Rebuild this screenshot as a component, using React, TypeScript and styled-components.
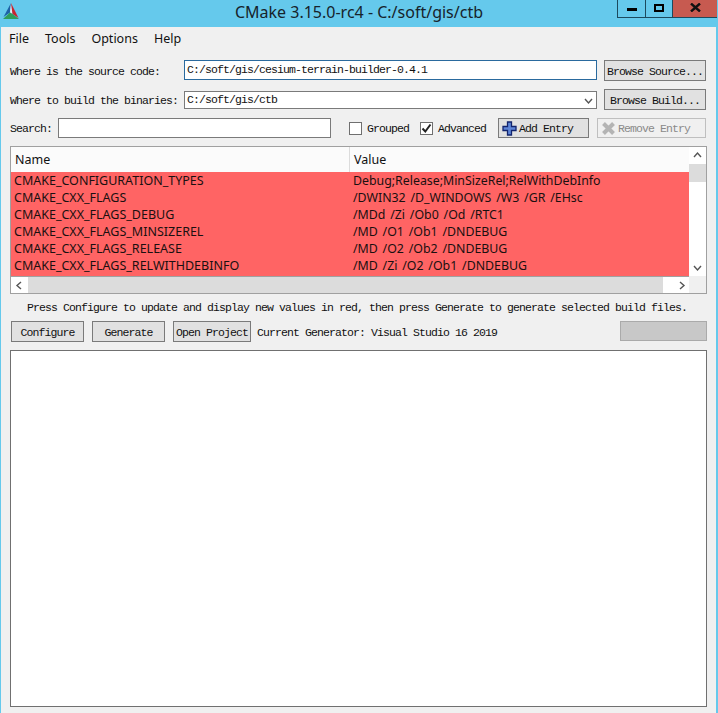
import styled, { createGlobalStyle } from 'styled-components';

const rows = [
    ['CMAKE_CONFIGURATION_TYPES', 'Debug;Release;MinSizeRel;RelWithDebInfo'],
    ['CMAKE_CXX_FLAGS', '/DWIN32 /D_WINDOWS /W3 /GR /EHsc'],
    ['CMAKE_CXX_FLAGS_DEBUG', '/MDd /Zi /Ob0 /Od /RTC1'],
    ['CMAKE_CXX_FLAGS_MINSIZEREL', '/MD /O1 /Ob1 /DNDEBUG'],
    ['CMAKE_CXX_FLAGS_RELEASE', '/MD /O2 /Ob2 /DNDEBUG'],
    ['CMAKE_CXX_FLAGS_RELWITHDEBINFO', '/MD /Zi /O2 /Ob1 /DNDEBUG'],
];

const Chevron: React.FC<{ dir: 'up' | 'down' | 'left' | 'right' }> = ({ dir }) => {
    const points = {
        up: '2,7 5.5,3 9,7',
        down: '2,4 5.5,8 9,4',
        left: '7,2 3,5.5 7,9',
        right: '4,2 8,5.5 4,9',
    }[dir];
    return (
        <svg width="11" height="11" viewBox="0 0 11 11">
            <polyline points={points} fill="none" stroke="#555" strokeWidth="1.4" />
        </svg>
    );
};

const App: React.FC = () => {
    return (
        <>
            <GlobalStyle />
            <StyledWindow>
                <StyledTitleBar>
                    <StyledLogo viewBox="0 0 16 16" width="16" height="16">
                        <polygon points="8,0 0.5,14 7,9.5" fill="#1d62a6" />
                        <polygon points="8,0 7,9.5 9.5,11" fill="#e6edf2" />
                        <polygon points="8,0 9.5,11 15.5,15" fill="#c9242f" />
                        <polygon points="0,16 16,16 9.5,11 7,9.5" fill="#2f9e5a" />
                    </StyledLogo>
                    <StyledTitle>CMake 3.15.0-rc4 - C:/soft/gis/ctb</StyledTitle>
                    <StyledControls>
                        <StyledControl $width={28}>
                            <StyledMinimize />
                        </StyledControl>
                        <StyledControl $width={27}>
                            <StyledMaximize />
                        </StyledControl>
                        <StyledClose>
                            <svg width="11" height="9" viewBox="0 0 11 9">
                                <path d="M1 0.5 L10 8.5 M10 0.5 L1 8.5" stroke="#111" strokeWidth="2.4" />
                            </svg>
                        </StyledClose>
                    </StyledControls>
                </StyledTitleBar>
                <StyledMenuBar>
                    <StyledMenuItem>File</StyledMenuItem>
                    <StyledMenuItem>Tools</StyledMenuItem>
                    <StyledMenuItem>Options</StyledMenuItem>
                    <StyledMenuItem>Help</StyledMenuItem>
                </StyledMenuBar>
                <StyledContent>
                    <StyledPathGrid>
                        <StyledLabel>Where is the source code:</StyledLabel>
                        <StyledPathField $height={20} $focused>
                            C:/soft/gis/cesium-terrain-builder-0.4.1
                        </StyledPathField>
                        <StyledButton>Browse Source...</StyledButton>
                        <StyledLabel>Where to build the binaries:</StyledLabel>
                        <StyledPathField $height={18}>
                            C:/soft/gis/ctb
                            <StyledComboArrow>
                                <Chevron dir="down" />
                            </StyledComboArrow>
                        </StyledPathField>
                        <StyledButton>Browse Build...</StyledButton>
                    </StyledPathGrid>
                    <StyledSearchRow>
                        <StyledSearchLabel>Search:</StyledSearchLabel>
                        <StyledSearchInput />
                        <StyledCheckGroup>
                            <StyledCheckbox />
                            <StyledLabel>Grouped</StyledLabel>
                        </StyledCheckGroup>
                        <StyledCheckGroup>
                            <StyledCheckbox>
                                <svg width="11" height="11" viewBox="0 0 11 11">
                                    <path d="M1.5 5.5 L4.3 8.5 L9.5 1.5" fill="none" stroke="#222" strokeWidth="2" />
                                </svg>
                            </StyledCheckbox>
                            <StyledLabel>Advanced</StyledLabel>
                        </StyledCheckGroup>
                        <StyledEntryButton $width={91} $offset={12}>
                            <svg width="15" height="15" viewBox="0 0 15 15">
                                <path
                                    d="M5.5 1 H9.5 V5.5 H14 V9.5 H9.5 V14 H5.5 V9.5 H1 V5.5 H5.5 Z"
                                    fill="#5f86d8"
                                    stroke="#12246e"
                                    strokeWidth="1.3"
                                />
                            </svg>
                            Add Entry
                        </StyledEntryButton>
                        <StyledEntryButton $width={109} $offset={8} $disabled>
                            <svg width="15" height="15" viewBox="0 0 15 15">
                                <path d="M2.5 2.5 L12.5 12.5 M12.5 2.5 L2.5 12.5" stroke="#b4b4b4" strokeWidth="4" />
                            </svg>
                            Remove Entry
                        </StyledEntryButton>
                    </StyledSearchRow>
                    <StyledTable>
                        <StyledTableMain>
                            <StyledHeader>
                                <StyledHeaderCell $width={339}>Name</StyledHeaderCell>
                                <StyledHeaderCell>Value</StyledHeaderCell>
                            </StyledHeader>
                            <StyledRows>
                                {rows.map(([name, value]) => (
                                    <StyledRow key={name}>
                                        <StyledCell>{name}</StyledCell>
                                        <StyledValueCell>{value}</StyledValueCell>
                                    </StyledRow>
                                ))}
                            </StyledRows>
                        </StyledTableMain>
                        <StyledVScroll>
                            <StyledArrowButton $height={17}>
                                <Chevron dir="up" />
                            </StyledArrowButton>
                            <StyledVThumb />
                            <StyledVTrack />
                            <StyledArrowButton $height={17}>
                                <Chevron dir="down" />
                            </StyledArrowButton>
                        </StyledVScroll>
                        <StyledHScroll>
                            <StyledArrowButton $width={17}>
                                <Chevron dir="left" />
                            </StyledArrowButton>
                            <StyledHThumb />
                            <StyledHTrack />
                            <StyledArrowButton $width={16}>
                                <Chevron dir="right" />
                            </StyledArrowButton>
                        </StyledHScroll>
                        <StyledCorner />
                    </StyledTable>
                    <StyledHint>
                        Press Configure to update and display new values in red, then press Generate to generate selected build files.
                    </StyledHint>
                    <StyledActionRow>
                        <StyledActionButton $width={73}>Configure</StyledActionButton>
                        <StyledActionButton $width={73}>Generate</StyledActionButton>
                        <StyledActionButton $width={78}>Open Project</StyledActionButton>
                        <StyledGenerator>Current Generator: Visual Studio 16 2019</StyledGenerator>
                        <StyledProgress />
                    </StyledActionRow>
                    <StyledOutput />
                </StyledContent>
            </StyledWindow>
        </>
    );
};

export default App;

const GlobalStyle = createGlobalStyle`
    html, body {
        margin: 0;
        height: 100%;
        overflow: hidden;
    }
    #root {
        height: 100%;
    }
    * {
        box-sizing: border-box;
    }
`;

const monoText = `
    font-family: 'Liberation Mono', monospace;
    font-size: 11.5px;
    letter-spacing: -0.9px;
    color: #111;
    white-space: pre;
    padding-top: 1px;
`;

const StyledWindow = styled.div`
    width: 718px;
    height: 713px;
    display: flex;
    flex-direction: column;
    background: #65c9ec;
    padding: 0 2px 0 1px;
`;

const StyledTitleBar = styled.div`
    height: 27px;
    flex: none;
    margin: 0 -2px 0 -1px;
    display: grid;
    grid-template-columns: 1fr auto 1fr;
    align-items: start;
`;

const StyledLogo = styled.svg`
    margin: 3px 0 0 3px;
`;

const StyledTitle = styled.div`
    font-family: 'Noto Sans', sans-serif;
    font-size: 16px;
    line-height: 24px;
    color: #16232b;
`;

const StyledControls = styled.div`
    justify-self: end;
    display: flex;
    height: 18px;
    margin-right: 1px;
    border-left: 1px solid #1c4a5e;
    border-bottom: 1px solid #1c4a5e;
`;

const StyledControl = styled.div<{ $width: number }>`
    width: ${(p) => p.$width}px;
    display: flex;
    align-items: center;
    justify-content: center;
    border-right: 1px solid #1c4a5e;
`;

const StyledMinimize = styled.div`
    width: 10px;
    height: 3px;
    margin-top: 2px;
    background: #000;
`;

const StyledMaximize = styled.div`
    width: 10px;
    height: 8px;
    margin-bottom: 2px;
    border: 2px solid #000;
`;

const StyledClose = styled.div`
    width: 44px;
    display: flex;
    align-items: center;
    justify-content: center;
    padding-bottom: 2px;
    background: #c75a50;
`;

const StyledMenuBar = styled.div`
    height: 23px;
    flex: none;
    display: flex;
    align-items: center;
    gap: 16px;
    padding: 0 0 1px 8px;
    background: #f0f0f0;
`;

const StyledMenuItem = styled.div`
    font-family: 'Noto Sans', sans-serif;
    font-size: 12.5px;
    color: #111;
`;

const StyledContent = styled.div`
    flex: 1;
    display: flex;
    flex-direction: column;
    min-height: 0;
    padding: 10px 9px 6px 9px;
    background: #f0f0f0;
`;

const StyledPathGrid = styled.div`
    display: grid;
    grid-template-columns: 174px 413px 102px;
    grid-auto-rows: 21px;
    column-gap: 0;
    row-gap: 8px;
    align-items: center;
`;

const StyledLabel = styled.div`
    ${monoText}
`;

const StyledPathField = styled.div<{ $height: number; $focused?: boolean }>`
    ${monoText}
    position: relative;
    height: ${(p) => p.$height}px;
    width: 413px;
    line-height: ${(p) => p.$height - 4}px;
    padding: 1px 2px;
    align-self: ${(p) => (p.$focused ? 'start' : 'center')};
    background: #fff;
    border: 1px solid ${(p) => (p.$focused ? '#2a6a9e' : '#7a7a7a')};
`;

const StyledComboArrow = styled.span`
    position: absolute;
    right: 2px;
    top: 3px;
    display: flex;
`;

const StyledButton = styled.div`
    ${monoText}
    height: 21px;
    width: 102px;
    margin-left: 7px;
    display: flex;
    align-items: center;
    justify-content: center;
    background: #e1e1e1;
    border: 1px solid #7a7a7a;
`;

const StyledSearchRow = styled.div`
    display: flex;
    align-items: center;
    height: 20px;
    margin-top: 8px;
`;

const StyledSearchLabel = styled.div`
    ${monoText}
    width: 48px;
`;

const StyledSearchInput = styled.div`
    width: 273px;
    height: 20px;
    background: #fff;
    border: 1px solid #7a7a7a;
`;

const StyledCheckGroup = styled.div`
    display: flex;
    align-items: center;
    gap: 5px;
    margin-left: 18px;

    & + & {
        margin-left: 11px;
    }
`;

const StyledCheckbox = styled.div`
    width: 13px;
    height: 13px;
    display: flex;
    align-items: center;
    justify-content: center;
    background: #fff;
    border: 1px solid #6f6f6f;
`;

const StyledEntryButton = styled.div<{ $width: number; $offset: number; $disabled?: boolean }>`
    ${monoText}
    width: ${(p) => p.$width}px;
    height: 20px;
    display: flex;
    align-items: center;
    gap: 2px;
    padding: 0 0 0 3px;
    margin-left: ${(p) => p.$offset}px;
    color: ${(p) => (p.$disabled ? '#8a8a8a' : '#111')};
    background: ${(p) => (p.$disabled ? '#f0f0f0' : '#e1e1e1')};
    border: 1px solid ${(p) => (p.$disabled ? '#bfbfbf' : '#7a7a7a')};
`;

const StyledTable = styled.div`
    width: 697px;
    height: 148px;
    margin-top: 8px;
    flex: none;
    display: grid;
    grid-template-columns: 678px 17px;
    grid-template-rows: 129px 17px;
    background: #fff;
    border: 1px solid #a0a0a0;
`;

const StyledTableMain = styled.div`
    display: flex;
    flex-direction: column;
    min-width: 0;
`;

const StyledHeader = styled.div`
    height: 25px;
    flex: none;
    display: flex;
    background: #fbfbfb;
`;

const StyledHeaderCell = styled.div<{ $width?: number }>`
    width: ${(p) => (p.$width ? `${p.$width}px` : 'auto')};
    flex: ${(p) => (p.$width ? 'none' : 1)};
    padding: 0 3px 0 4px;
    font-family: 'Noto Sans', sans-serif;
    font-size: 12.5px;
    line-height: 25px;
    color: #111;
    border-right: ${(p) => (p.$width ? '1px solid #dcdcdc' : 'none')};
`;

const StyledRows = styled.div`
    flex: 1;
    background: #ff6464;
`;

const StyledRow = styled.div`
    height: 17px;
    display: grid;
    grid-template-columns: 339px 1fr;
    font-family: 'Noto Sans', sans-serif;
    font-size: 12.5px;
    line-height: 17px;
    color: #1a1010;
`;

const StyledCell = styled.span`
    padding-left: 3px;
    white-space: pre;
`;

const StyledValueCell = styled(StyledCell)`
    font-size: 12.35px;
    word-spacing: 1.6px;
`;

const StyledVScroll = styled.div`
    display: flex;
    flex-direction: column;
    background: #fff;
`;

const StyledArrowButton = styled.div<{ $width?: number; $height?: number }>`
    flex: none;
    width: ${(p) => (p.$width ? `${p.$width}px` : '100%')};
    height: ${(p) => (p.$height ? `${p.$height}px` : '100%')};
    display: flex;
    align-items: center;
    justify-content: center;
    background: #fff;
`;

const StyledVThumb = styled.div`
    height: 18px;
    flex: none;
    background: #dcdcdc;
`;

const StyledVTrack = styled.div`
    flex: 1;
`;

const StyledHScroll = styled.div`
    display: flex;
    background: #fff;
    border-top: 1px solid #a0a0a0;
`;

const StyledHThumb = styled.div`
    width: 635px;
    flex: none;
    background: #dcdcdc;
`;

const StyledHTrack = styled.div`
    flex: 1;
`;

const StyledCorner = styled.div`
    background: #f0f0f0;
`;

const StyledHint = styled.div`
    ${monoText}
    height: 27px;
    flex: none;
    line-height: 25px;
    padding-left: 17px;
`;

const StyledActionRow = styled.div`
    height: 21px;
    flex: none;
    display: flex;
    align-items: flex-start;
    gap: 8px;
    padding-left: 1px;
`;

const StyledActionButton = styled.div<{ $width: number }>`
    ${monoText}
    width: ${(p) => p.$width}px;
    height: 21px;
    display: flex;
    align-items: center;
    justify-content: center;
    background: #e1e1e1;
    border: 1px solid #7a7a7a;
`;

const StyledGenerator = styled.div`
    ${monoText}
    flex: 1;
    line-height: 21px;
    margin-left: -2px;
`;

const StyledProgress = styled.div`
    width: 87px;
    height: 20px;
    background: #c8c8c8;
    border: 1px solid #aaa;
`;

const StyledOutput = styled.div`
    flex: 1;
    margin-top: 8px;
    width: 697px;
    background: #fff;
    border: 1px solid #707070;
`;
